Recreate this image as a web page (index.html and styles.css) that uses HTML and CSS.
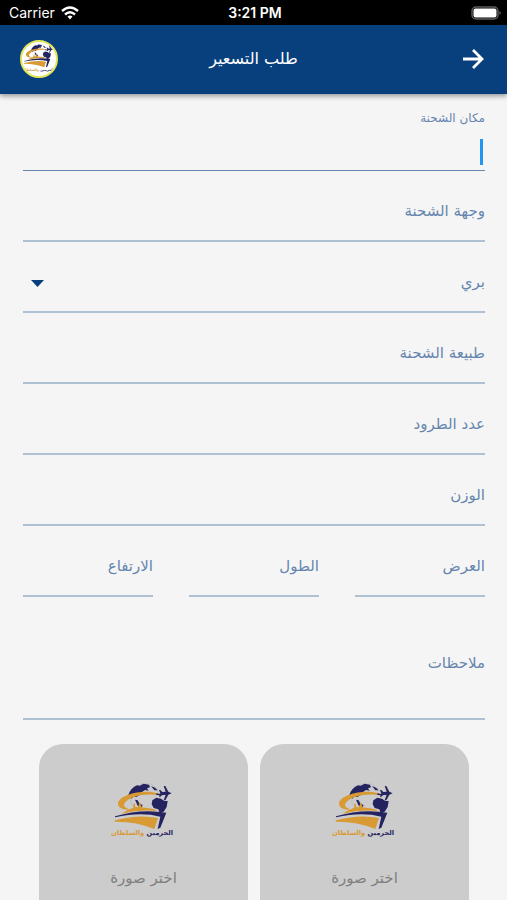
FILE: index.html
```
<!DOCTYPE html>
<html lang="ar" dir="rtl">
    <head>
        <title>طلب التسعير</title>
        <meta charset="UTF-8">
        <meta name="viewport" content="width=device-width, initial-scale=1">
        <link rel="stylesheet" href="styles.css">
    </head>
    <body>
        <svg class="defs" aria-hidden="true">
            <symbol id="logo" viewBox="0 0 270 225">
                <!-- globe -->
                <circle cx="139" cy="70" r="45" fill="none" stroke="#a9abb8" stroke-width="1"/>
                <path class="navy" d="M88 60C92 46 102 36 114 31L122 32 134 26 150 29 153 37 144 40 149 47 138 45 130 50 122 60 112 66 104 64 97 71Z"/>
                <path class="navy" d="M108 74L116 76 120 84 131 91 126 99 116 92Z"/>
                <path class="navy" d="M160 76L172 68 186 71 196 78 206 78 203 96 194 110 182 115 178 103 164 99 158 88Z"/>
                <path class="navy" d="M156 33L168 38 176 46 166 46Z"/>
                <!-- orbit -->
                <path class="gold" d="M176 55C140 42 60 56 57 86C57 99 74 105 92 103C78 98 72 93 77 84C90 65 136 54 176 60Z"/>
                <path d="M172 57Q188 62 204 55" fill="none" stroke="#25235f" stroke-width="4"/>
                <!-- plane -->
                <path class="navy" d="M218 55L208 50 199 33H194L200 50 190 51 184 45H180L184 55 180 65H184L190 59 200 59 194 76H199L208 59Z"/>
                <!-- ship -->
                <path class="gold" d="M84 106L103 98V86H108V95L117 97 122 80 128 97 160 101 176 108Q120 103 68 117Z"/>
                <path class="navy" d="M48 124Q125 100 202 113L184 158 176 162 184 125Q125 110 48 127Z"/>
                <path class="gold" d="M47 136Q119 117 177 129L166 162Q111 139 47 140Z"/>
                <text class="logo-text" x="222" y="181"><tspan class="navy">الحرمين</tspan> <tspan class="gold">والسلطان</tspan></text>
            </symbol>
        </svg>

        <div class="app">
            <div class="status" dir="ltr">
                <div class="carrier">
                    <span>Carrier</span>
                    <svg width="18" height="14" viewBox="0 0 18 14" fill="none" stroke="#fff" stroke-width="2.4">
                        <path d="M1 5Q9-2 17 5"/>
                        <path d="M4 8.500Q9 4 14 8.500"/>
                        <path d="M6.500 10.500Q9 8.500 11.500 10.500L9 13.500Z" fill="#fff" stroke="none"/>
                    </svg>
                </div>
                <span class="time">3:21 PM</span>
                <svg class="battery" width="30" height="14" viewBox="0 0 30 14">
                    <rect x="1" y="1" width="26" height="12" rx="4" fill="none" stroke="#5c5c5c" stroke-width="1.500"/>
                    <rect x="2.500" y="2.500" width="23" height="9" rx="2" fill="#fff"/>
                    <path d="M28.500 5Q31 7 28.500 9Z" fill="#777"/>
                </svg>
            </div>

            <header class="topbar">
                <button class="back" type="button" aria-label="رجوع">
                    <svg width="24" height="24" viewBox="0 0 24 24" fill="none" stroke="#fff" stroke-width="2.800">
                        <path d="M2 12H21M12 3L21 12L12 21"/>
                    </svg>
                </button>
                <h1>طلب التسعير</h1>
                <span class="avatar"><svg width="46" height="38"><use href="#logo"/></svg></span>
            </header>

            <form class="form">
                <div class="field active">
                    <label for="from">مكان الشحنة</label>
                    <input id="from" type="text">
                    <span class="caret"></span>
                </div>
                <div class="field">
                    <label for="to">وجهة الشحنة</label>
                    <input id="to" type="text">
                </div>
                <div class="field">
                    <select aria-label="طريقة الشحن">
                        <option>بري</option>
                        <option>بحري</option>
                        <option>جوي</option>
                    </select>
                    <svg class="arrow" width="13" height="7" viewBox="0 0 13 7"><path d="M0 0H13L6.500 7Z" fill="#073f7d"/></svg>
                </div>
                <div class="field">
                    <label for="kind">طبيعة الشحنة</label>
                    <input id="kind" type="text">
                </div>
                <div class="field">
                    <label for="count">عدد الطرود</label>
                    <input id="count" type="text">
                </div>
                <div class="field">
                    <label for="weight">الوزن</label>
                    <input id="weight" type="text">
                </div>
                <div class="sizes">
                    <div class="field">
                        <label for="width">العرض</label>
                        <input id="width" type="text">
                    </div>
                    <div class="field">
                        <label for="length">الطول</label>
                        <input id="length" type="text">
                    </div>
                    <div class="field">
                        <label for="height">الارتفاع</label>
                        <input id="height" type="text">
                    </div>
                </div>
                <div class="field notes">
                    <label for="notes">ملاحظات</label>
                    <textarea id="notes" rows="1"></textarea>
                </div>
                <div class="photos">
                    <button class="photo" type="button">
                        <svg width="90" height="75"><use href="#logo"/></svg>
                        <span>اختر صورة</span>
                    </button>
                    <button class="photo" type="button">
                        <svg width="90" height="75"><use href="#logo"/></svg>
                        <span>اختر صورة</span>
                    </button>
                </div>
            </form>
        </div>
    </body>
</html>
```
FILE: styles.css
```
* {
    margin: 0;
    padding: 0;
    box-sizing: border-box;
}

body {
    background-color: #f5f5f5;
    font-family: "DejaVu Sans", sans-serif;
    font-size: 15px;
    line-height: 24px;
}

button, input, select, textarea {
    font: inherit;
    color: inherit;
    border: 0;
    outline: 0;
    background: none;
}

.defs {
    position: absolute;
    width: 0;
    height: 0;
}

.navy {
    fill: #25235f;
}

.gold {
    fill: #d79a35;
}

.logo-text {
    font-size: 20px;
    font-weight: bold;
}

.app {
    display: flex;
    flex-direction: column;
    height: 100vh;
}

/* status bar */
.status {
    display: grid;
    grid-template-columns: 1fr auto 1fr;
    align-items: center;
    flex: none;
    padding: 1px 6px 0 9px;
    color: #fff;
    background-color: #000;
    font-family: Inter, sans-serif;
    font-size: 14px;
}

.carrier {
    display: flex;
    align-items: center;
    gap: 6px;
}

.time {
    font-weight: 600;
}

.battery {
    justify-self: end;
}

/* top bar */
.topbar {
    display: flex;
    align-items: center;
    justify-content: space-between;
    flex: none;
    position: relative;
    padding: 15px 20px 16px;
    color: #fff;
    background-color: #083f7d;
    box-shadow: 0 2px 5px rgba(0, 0, 0, 0.4);
}

.topbar h1 {
    font-size: 16px;
    font-weight: normal;
}

.back, .avatar {
    display: flex;
    align-items: center;
    width: 38px;
    height: 38px;
}

.back {
    padding-right: 2px;
    cursor: pointer;
}

.avatar {
    justify-content: center;
    overflow: hidden;
    border: 2px solid #e6e65a;
    border-radius: 50%;
    background-color: #fff;
}

.avatar svg {
    flex: none;
}

/* form */
.form {
    flex: 1;
    overflow: auto;
    scrollbar-width: none;
    padding: 0 22px 24px 23px;
    color: #6685ae;
}

.field {
    display: flex;
    position: relative;
    min-width: 0;
    padding: 28px 0 17px;
    border-bottom: 2px solid #afc0d2;
}

.field label {
    flex: none;
}

.field input, .field select, .field textarea {
    flex: 1;
    width: 100%;
    min-width: 0;
    height: 24px;
    resize: none;
}

.field select {
    appearance: none;
    cursor: pointer;
}

.arrow {
    position: absolute;
    left: 8px;
    top: 38px;
    pointer-events: none;
}

.active {
    flex-direction: column;
    padding: 12px 0 4px;
    border-bottom: 1px solid #6685ae;
}

.active label {
    font-size: 12px;
}

.active input {
    flex: none;
    height: 36px;
}

.caret {
    position: absolute;
    right: 2px;
    bottom: 5px;
    width: 3px;
    height: 26px;
    background-color: #2196f3;
}

.sizes {
    display: grid;
    grid-template-columns: repeat(3, minmax(0, 1fr));
    gap: 36px;
}

.notes {
    padding: 54px 0 43px;
}

.photos {
    display: grid;
    grid-template-columns: 1fr 1fr;
    gap: 12px;
    padding: 24px 16px 0;
}

.photo {
    display: flex;
    flex-direction: column;
    align-items: center;
    gap: 16px;
    padding: 31px 0 55px;
    border-radius: 24px;
    color: #808080;
    background-color: #ccc;
    cursor: pointer;
}
```
